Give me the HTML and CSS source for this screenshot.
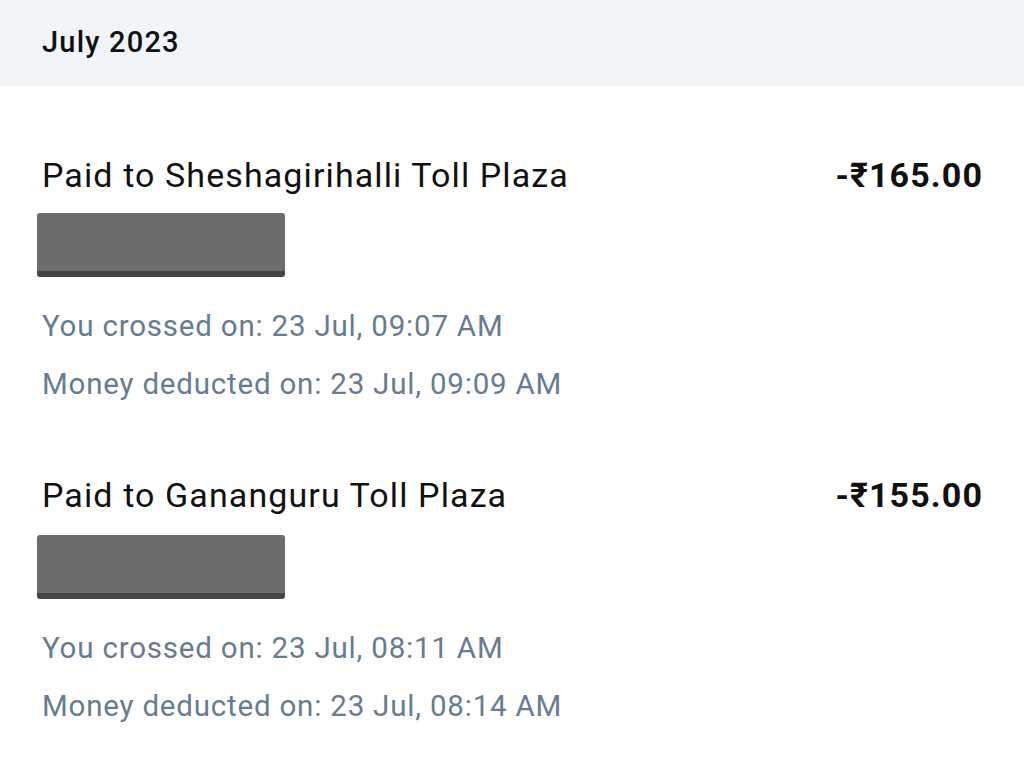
FILE: index.html
```html
<!DOCTYPE html>
<html lang="en">
<head>
    <meta charset="UTF-8"/>
    <title>FASTag Transactions</title>
    <link rel="stylesheet" href="styles.css">
</head>
<body>
<div class="month-header">July 2023</div>

<div class="txn-list">
    <div class="txn">
        <div class="txn-top">
            <div class="txn-title">Paid to Sheshagirihalli Toll Plaza</div>
            <div class="txn-amount">-₹165.00</div>
        </div>
        <div class="redacted"></div>
        <div class="txn-meta">You crossed on: 23 Jul, 09:07 AM</div>
        <div class="txn-meta">Money deducted on: 23 Jul, 09:09 AM</div>
    </div>

    <div class="txn">
        <div class="txn-top">
            <div class="txn-title">Paid to Gananguru Toll Plaza</div>
            <div class="txn-amount">-₹155.00</div>
        </div>
        <div class="redacted"></div>
        <div class="txn-meta">You crossed on: 23 Jul, 08:11 AM</div>
        <div class="txn-meta">Money deducted on: 23 Jul, 08:14 AM</div>
    </div>
</div>
</body>
</html>
```

FILE: styles.css
```css
body {
    margin: 0;
    background-color: #FFFFFF;
    font-family: Roboto, "Noto Sans", sans-serif;
    color: #111111;
}
.month-header {
    background-color: #F1F5F8;
    height: 86px;
    padding-left: 42px;
    font-size: 29px;
    font-weight: 500;
    letter-spacing: 1.2px;
    line-height: 84px;
    box-sizing: border-box;
}
.txn-list {
    display: flex;
    flex-direction: column;
    padding: 0 42px;
}
.txn {
    display: flex;
    flex-direction: column;
    padding-top: 69px;
}
.txn + .txn {
    padding-top: 62px;
}
.txn-top {
    display: flex;
    justify-content: space-between;
    align-items: baseline;
}
.txn-title {
    font-size: 34px;
    letter-spacing: 1.1px;
    line-height: 40px;
}
.txn-amount {
    font-size: 34px;
    font-weight: bold;
    letter-spacing: 1.1px;
    line-height: 40px;
    margin-right: -1px;
}
.redacted {
    width: 248px;
    height: 58px;
    margin: 18px 0 0 -5px;
    background-color: #6C6C6C;
    border-bottom: 6px solid #454545;
    border-radius: 3px;
}
.txn + .txn .redacted {
    margin-top: 20px;
}
.txn-meta {
    font-size: 29.5px;
    letter-spacing: 0.8px;
    line-height: 58px;
    color: #677C91;
}
.redacted + .txn-meta {
    margin-top: 20px;
}
```
